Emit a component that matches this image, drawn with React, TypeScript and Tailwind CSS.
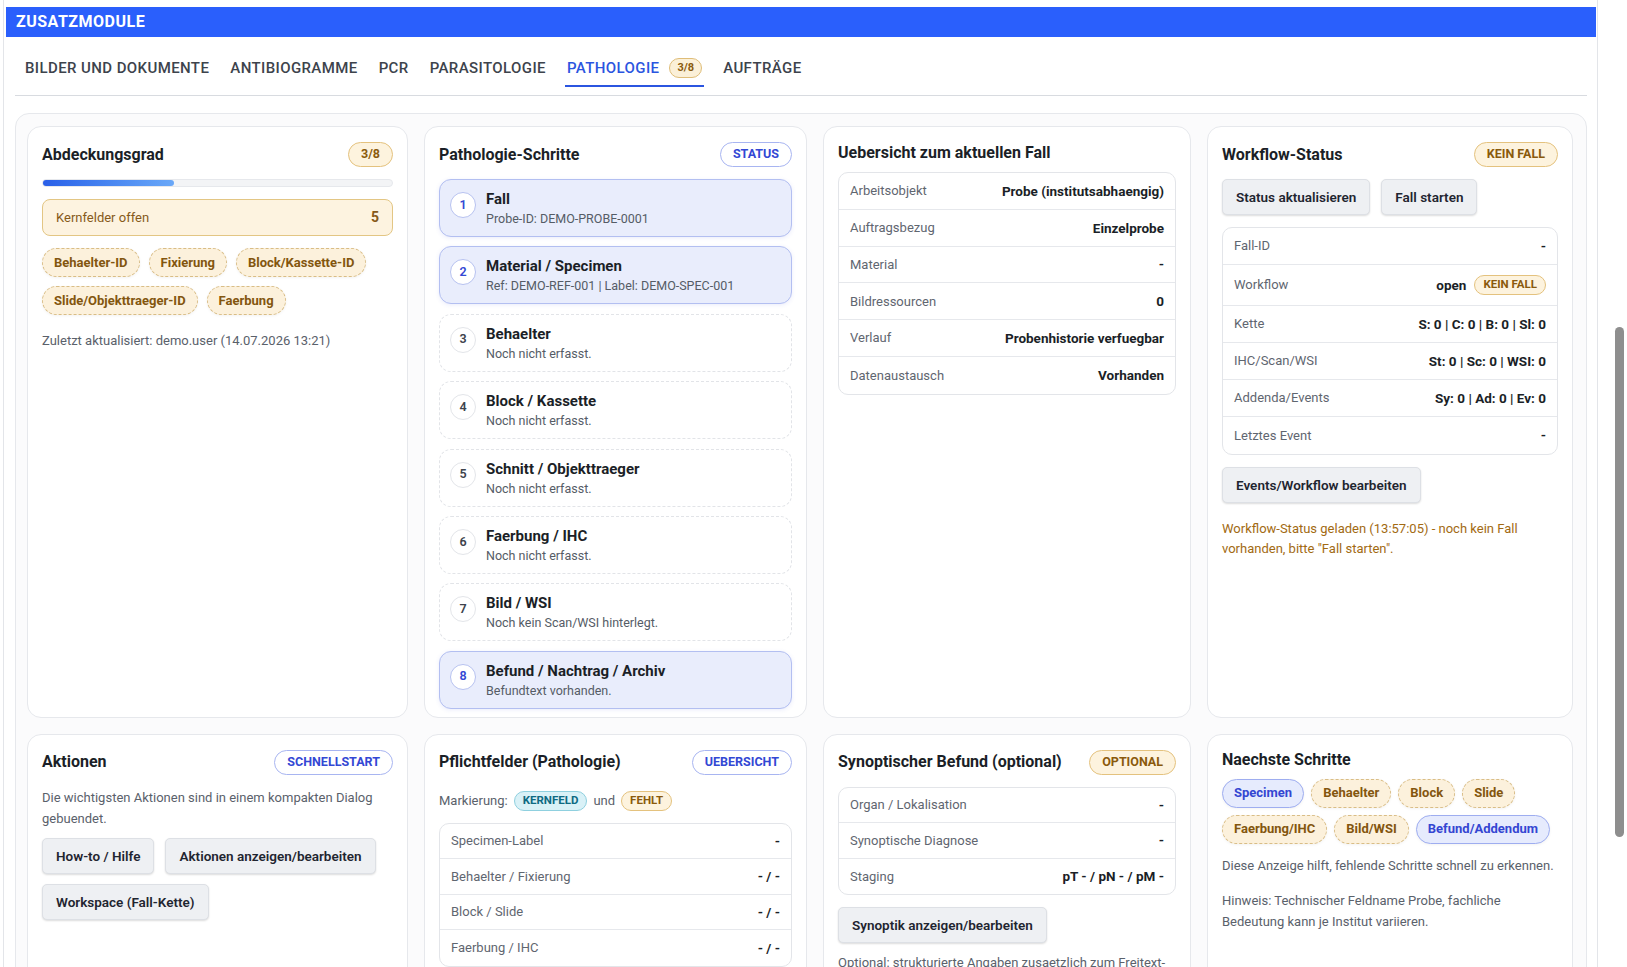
import React from "react";

type Tone = "amber" | "blue" | "cyan";

const toneCls: Record<Tone, string> = {
  amber: "border-[#e4c27e] bg-[#fdf3de] text-[#8a5a0c]",
  blue: "border-[#a8b5f1] bg-white text-[#3348d4]",
  cyan: "border-[#8fd0df] bg-[#d9f1f7] text-[#0f6a82]",
};

function Badge({ tone, children }: { tone: Tone; children: React.ReactNode }) {
  return (
    <span
      className={`inline-flex h-[25px] items-center rounded-full border px-[12px] text-[12.5px] font-bold uppercase ${toneCls[tone]}`}
    >
      {children}
    </span>
  );
}

function SmallBadge({ tone, children }: { tone: Tone; children: React.ReactNode }) {
  return (
    <span
      className={`inline-flex h-[20px] items-center rounded-full border px-[8px] text-[11.5px] font-bold uppercase ${toneCls[tone]}`}
    >
      {children}
    </span>
  );
}

function Chip({ kind, children }: { kind: "missing" | "ok"; children: React.ReactNode }) {
  const cls =
    kind === "missing"
      ? "border-dashed border-[#d9bd86] bg-[#fcf1dc] text-[#83560f]"
      : "border-solid border-[#9eadf0] bg-[#e6ebfd] text-[#3446d2]";
  return (
    <span
      className={`inline-flex h-[29px] items-center rounded-full border px-[11px] text-[13px] font-bold shadow-[0_1px_3px_rgba(0,0,0,0.05)] ${cls}`}
    >
      {children}
    </span>
  );
}

function Btn({ children }: { children: React.ReactNode }) {
  return (
    <button className="inline-flex h-[36px] items-center rounded-[5px] border border-[#dde0e5] bg-[#eef0f3] px-[13px] text-[13.5px] font-semibold text-[#1f2530] shadow-[0_1px_2px_rgba(0,0,0,0.14)]">
      {children}
    </button>
  );
}

function Card({ children, className = "" }: { children: React.ReactNode; className?: string }) {
  return (
    <div className={`rounded-[14px] border border-[#e6e8ec] bg-white px-[14px] pt-[15px] ${className}`}>
      {children}
    </div>
  );
}

function CardHead({ title, badge }: { title: string; badge?: React.ReactNode }) {
  return (
    <div className="flex min-h-[25px] items-center justify-between">
      <h2 className="text-[16px] font-bold leading-[22px] text-[#1b1f27]">{title}</h2>
      {badge}
    </div>
  );
}

function KV({ rows, rowH = "h-[37px]" }: { rows: [string, React.ReactNode][]; rowH?: string }) {
  return (
    <div className="divide-y divide-[#e6e8ec] rounded-[10px] border border-[#e3e5e9] bg-white">
      {rows.map(([k, v], i) => (
        <div key={i} className={`flex items-center justify-between px-[11px] ${rowH}`}>
          <span className="text-[13px] text-[#5f6670]">{k}</span>
          <span className="text-[13.5px] font-bold text-[#1b1f27]">{v}</span>
        </div>
      ))}
    </div>
  );
}

const steps = [
  { n: 1, t: "Fall", s: "Probe-ID: DEMO-PROBE-0001", on: true },
  { n: 2, t: "Material / Specimen", s: "Ref: DEMO-REF-001 | Label: DEMO-SPEC-001", on: true },
  { n: 3, t: "Behaelter", s: "Noch nicht erfasst.", on: false },
  { n: 4, t: "Block / Kassette", s: "Noch nicht erfasst.", on: false },
  { n: 5, t: "Schnitt / Objekttraeger", s: "Noch nicht erfasst.", on: false },
  { n: 6, t: "Faerbung / IHC", s: "Noch nicht erfasst.", on: false },
  { n: 7, t: "Bild / WSI", s: "Noch kein Scan/WSI hinterlegt.", on: false },
  { n: 8, t: "Befund / Nachtrag / Archiv", s: "Befundtext vorhanden.", on: true },
];

const tabs = ["BILDER UND DOKUMENTE", "ANTIBIOGRAMME", "PCR", "PARASITOLOGIE", "PATHOLOGIE", "AUFTRÄGE"];

export default function App() {
  return (
    <div className="flex h-[967px] overflow-hidden bg-white font-['Roboto',sans-serif] text-[#1b1f27]">
      <div className="w-[1612px] shrink-0 pl-[3px]">
        <div className="h-full w-[1595px] border-x border-[#e3e5e9] pl-[2px] pr-[1px] pt-[7px]">
          {/* header bar */}
          <div className="flex h-[30px] items-center bg-[#2a5ffc] pl-[10px] text-[16px] font-bold tracking-[0.5px] text-white">
            ZUSATZMODULE
          </div>

          <div className="px-[9px]">
            {/* tabs */}
            <div className="flex gap-[17px] border-b border-[#d8dbe0] pl-[8px] pt-[20px] pb-[8px]">
              {tabs.map((t) => {
                const active = t === "PATHOLOGIE";
                return (
                  <div
                    key={t}
                    className={`flex items-center gap-[10px] border-b-[2px] px-[2px] pb-[6px] text-[15px] font-medium leading-[22px] tracking-[0.4px] ${
                      active ? "border-[#2b55e0] text-[#2b55e0]" : "border-transparent text-[#3d434c]"
                    }`}
                  >
                    {t}
                    {active && (
                      <span className="inline-flex h-[20px] items-center rounded-full border border-[#dfbd78] bg-[#fbf0d8] px-[7px] text-[11px] font-bold tracking-normal text-[#8a5a0c]">
                        3/8
                      </span>
                    )}
                  </div>
                );
              })}
            </div>

            {/* panel */}
            <div className="mt-[17px] rounded-[14px] border border-[#e6e8ec] bg-[#fbfbfc] pl-[11px] pt-[12px] pb-[40px]">
              <div className="grid grid-cols-[381px_383px_368px_366px] gap-4">
                {/* Abdeckungsgrad */}
                <Card>
                  <CardHead title="Abdeckungsgrad" badge={<Badge tone="amber">3/8</Badge>} />
                  <div className="mt-[12px] h-[8px] rounded-full border border-[#e6e8ec] bg-[#f3f4f6]">
                    <div className="h-full w-[37.5%] rounded-full bg-gradient-to-r from-[#2a5fe8] to-[#6aa8f8]" />
                  </div>
                  <div className="mt-[12px] flex h-[37px] items-center justify-between rounded-[8px] border border-[#e3c684] bg-[#fdf3e0] px-[13px] text-[#86591a]">
                    <span className="text-[13px]">Kernfelder offen</span>
                    <span className="text-[14px] font-bold">5</span>
                  </div>
                  <div className="mt-[12px] flex flex-wrap gap-x-[9px] gap-y-[9px]">
                    {["Behaelter-ID", "Fixierung", "Block/Kassette-ID", "Slide/Objekttraeger-ID", "Faerbung"].map((c) => (
                      <Chip key={c} kind="missing">
                        {c}
                      </Chip>
                    ))}
                  </div>
                  <p className="mt-[16px] text-[13px] leading-[20px] text-[#5a616b]">
                    Zuletzt aktualisiert: demo.user (14.07.2026 13:21)
                  </p>
                </Card>

                {/* Pathologie-Schritte */}
                <Card className="pb-[8px]">
                  <CardHead title="Pathologie-Schritte" badge={<Badge tone="blue">Status</Badge>} />
                  <div className="mt-[12px] flex flex-col gap-[9.4px]">
                    {steps.map((s) => (
                      <div
                        key={s.n}
                        className={`flex h-[58px] items-start gap-[10px] rounded-[12px] border px-[10px] pt-[9px] ${
                          s.on
                            ? "border-solid border-[#b3bff1] bg-[#e9edfc] shadow-[0_1px_4px_rgba(80,100,220,0.12)]"
                            : "border-dashed border-[#e2e4e8] bg-white"
                        }`}
                      >
                        <span
                          className={`mt-[3px] flex h-[26px] w-[26px] shrink-0 items-center justify-center rounded-full border bg-white text-[12.5px] font-semibold ${
                            s.on ? "border-[#b7c2f0] text-[#3348d4]" : "border-[#e3e5e9] text-[#3d434c]"
                          }`}
                        >
                          {s.n}
                        </span>
                        <div className="leading-[20px]">
                          <div className="text-[15px] font-bold text-[#1b1f27]">{s.t}</div>
                          <div className="text-[12.5px] text-[#555c66]">{s.s}</div>
                        </div>
                      </div>
                    ))}
                  </div>
                </Card>

                {/* Uebersicht */}
                <Card>
                  <div className="flex h-[21px] items-center">
                    <h2 className="text-[16px] font-bold">Uebersicht zum aktuellen Fall</h2>
                  </div>
                  <div className="mt-[9px]">
                    <KV
                      rowH="h-[36.8px]"
                      rows={[
                        ["Arbeitsobjekt", "Probe (institutsabhaengig)"],
                        ["Auftragsbezug", "Einzelprobe"],
                        ["Material", "-"],
                        ["Bildressourcen", "0"],
                        ["Verlauf", "Probenhistorie verfuegbar"],
                        ["Datenaustausch", "Vorhanden"],
                      ]}
                    />
                  </div>
                </Card>

                {/* Workflow-Status */}
                <Card>
                  <CardHead title="Workflow-Status" badge={<Badge tone="amber">Kein Fall</Badge>} />
                  <div className="mt-[12px] flex gap-[11px]">
                    <Btn>Status aktualisieren</Btn>
                    <Btn>Fall starten</Btn>
                  </div>
                  <div className="mt-[12px] divide-y divide-[#e6e8ec] rounded-[10px] border border-[#e3e5e9] bg-white">
                    {[
                      ["Fall-ID", "-"],
                      ["Workflow", "wf"],
                      ["Kette", "S: 0 | C: 0 | B: 0 | Sl: 0"],
                      ["IHC/Scan/WSI", "St: 0 | Sc: 0 | WSI: 0"],
                      ["Addenda/Events", "Sy: 0 | Ad: 0 | Ev: 0"],
                      ["Letztes Event", "-"],
                    ].map(([k, v]) => (
                      <div
                        key={k}
                        className={`flex items-center justify-between px-[11px] ${k === "Workflow" ? "h-[41px]" : "h-[37px]"}`}
                      >
                        <span className="text-[13px] text-[#5f6670]">{k}</span>
                        {v === "wf" ? (
                          <span className="flex items-center gap-[8px] text-[13.5px] font-bold">
                            open
                            <SmallBadge tone="amber">Kein Fall</SmallBadge>
                          </span>
                        ) : (
                          <span className="text-[13.5px] font-bold">{v}</span>
                        )}
                      </div>
                    ))}
                  </div>
                  <div className="mt-[12px]">
                    <Btn>Events/Workflow bearbeiten</Btn>
                  </div>
                  <p className="mt-[16px] text-[13px] leading-[20px] text-[#a26a12]">
                    Workflow-Status geladen (13:57:05) - noch kein Fall vorhanden, bitte "Fall starten".
                  </p>
                </Card>

                {/* Aktionen */}
                <Card className="h-[300px]">
                  <CardHead title="Aktionen" badge={<Badge tone="blue">Schnellstart</Badge>} />
                  <p className="mt-[12px] text-[13px] leading-[21px] text-[#5a616b]">
                    Die wichtigsten Aktionen sind in einem kompakten Dialog gebuendet.
                  </p>
                  <div className="mt-[9px] flex flex-wrap gap-x-[11px] gap-y-[10px]">
                    <Btn>How-to / Hilfe</Btn>
                    <Btn>Aktionen anzeigen/bearbeiten</Btn>
                    <Btn>Workspace (Fall-Kette)</Btn>
                  </div>
                </Card>

                {/* Pflichtfelder */}
                <Card className="h-[300px]">
                  <CardHead title="Pflichtfelder (Pathologie)" badge={<Badge tone="blue">Uebersicht</Badge>} />
                  <div className="mt-[16px] flex items-center gap-[6px] text-[13px] text-[#5a616b]">
                    Markierung:
                    <SmallBadge tone="cyan">Kernfeld</SmallBadge>
                    und
                    <SmallBadge tone="amber">Fehlt</SmallBadge>
                  </div>
                  <div className="mt-[12px]">
                    <KV
                      rowH="h-[35.5px]"
                      rows={[
                        ["Specimen-Label", "-"],
                        ["Behaelter / Fixierung", "- / -"],
                        ["Block / Slide", "- / -"],
                        ["Faerbung / IHC", "- / -"],
                      ]}
                    />
                  </div>
                </Card>

                {/* Synoptischer Befund */}
                <Card className="h-[300px]">
                  <CardHead title="Synoptischer Befund (optional)" badge={<Badge tone="amber">Optional</Badge>} />
                  <div className="mt-[12px]">
                    <KV
                      rowH="h-[35.5px]"
                      rows={[
                        ["Organ / Lokalisation", "-"],
                        ["Synoptische Diagnose", "-"],
                        ["Staging", "pT - / pN - / pM -"],
                      ]}
                    />
                  </div>
                  <div className="mt-[12px]">
                    <Btn>Synoptik anzeigen/bearbeiten</Btn>
                  </div>
                  <p className="mt-[10px] text-[13px] leading-[20px] text-[#5a616b]">
                    Optional: strukturierte Angaben zusaetzlich zum Freitext-Befund.
                  </p>
                </Card>

                {/* Naechste Schritte */}
                <Card className="h-[300px]">
                  <div className="flex h-[20px] items-center">
                    <h2 className="text-[16px] font-bold">Naechste Schritte</h2>
                  </div>
                  <div className="mt-[9px] flex flex-wrap gap-x-[7px] gap-y-[7px]">
                    <Chip kind="ok">Specimen</Chip>
                    <Chip kind="missing">Behaelter</Chip>
                    <Chip kind="missing">Block</Chip>
                    <Chip kind="missing">Slide</Chip>
                    <Chip kind="missing">Faerbung/IHC</Chip>
                    <Chip kind="missing">Bild/WSI</Chip>
                    <Chip kind="ok">Befund/Addendum</Chip>
                  </div>
                  <p className="mt-[12px] text-[13px] leading-[20px] text-[#5a616b]">
                    Diese Anzeige hilft, fehlende Schritte schnell zu erkennen.
                  </p>
                  <p className="mt-[14px] text-[13px] leading-[21px] text-[#5a616b]">
                    Hinweis: Technischer Feldname Probe, fachliche
                    <br />
                    Bedeutung kann je Institut variieren.
                  </p>
                </Card>
              </div>
            </div>
          </div>
        </div>
      </div>

      {/* page scrollbar */}
      <div className="flex w-[15px] justify-center">
        <div className="mt-[327px] h-[510px] w-[9px] rounded-full bg-[#8e8e8e]" />
      </div>
    </div>
  );
}
